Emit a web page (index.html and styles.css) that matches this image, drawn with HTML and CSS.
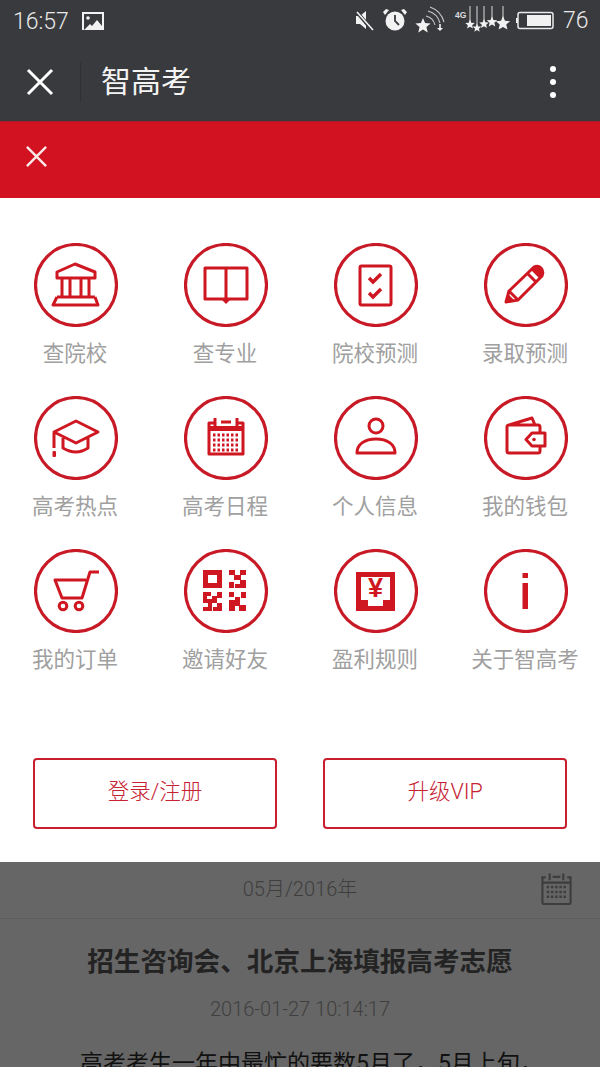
FILE: index.html
```html
<!DOCTYPE html>
<html lang="zh-CN">
<head>
<meta charset="utf-8">
<title>智高考</title>
<link rel="stylesheet" href="styles.css">
</head>
<body>
<div class="phone">
  <header class="status">
    <span class="time">16:57</span>
    <svg class="pic" viewBox="0 0 22 18"><path class="w" d="M0 0h22v18H0z"/><path class="d" d="M2 2h18v12l-5-6-5 6-2-2-6 6z"/><circle class="w" cx="6" cy="6" r="1.8"/></svg>
    <span class="grow"></span>
    <svg class="sys" viewBox="0 0 210 42">
      <defs><polygon id="s" points="0,-1 .26,-.36 .95,-.31 .43,.14 .59,.81 0,.45 -.59,.81 -.43,.14 -.95,-.31 -.26,-.36"/></defs>
      <path class="w" d="M6 16h4l6-5v18l-6-5H6z"/>
      <path class="kd" d="M6 11l17 20"/><path class="kw2" d="M7 12l16 18"/>
      <circle class="w" cx="45" cy="21" r="9.500"/><path class="hand" d="M45 15v6l4 4"/>
      <path class="w" d="M35 15l4-5-3-1-3 3zM55 15l-4-5 3-1 3 3z"/>
      <use class="w" href="#s" transform="translate(73 26) scale(8)"/>
      <path class="arc" d="M76 16a12 12 0 0 1 9 9M78 11a17 17 0 0 1 12 12M80 7a22 22 0 0 1 14 15"/>
      <path class="kw" d="M90 24v6"/><path class="w" d="M87 28h6l-3 3z"/>
      <text class="g4" x="105" y="18">4G</text>
      <path class="stem" d="M120 6v18M127 6v22M134 6v18M142 6v16M153 6v17"/>
      <use class="w" href="#s" transform="translate(120 24.500) scale(5)"/>
      <use class="w" href="#s" transform="translate(127 28) scale(4.500)"/>
      <use class="w" href="#s" transform="translate(134 24) scale(5)"/>
      <use class="w" href="#s" transform="translate(142 22) scale(5.500)"/>
      <use class="w" href="#s" transform="translate(153 23.500) scale(7.500)"/>
      <path class="w" d="M166 18h2v5h-2z"/>
      <rect class="batt" x="168" y="12.500" width="35" height="16" rx="2"/>
      <rect class="w" x="177" y="15" width="24" height="11"/>
    </svg>
    <span class="level">76</span>
  </header>

  <nav class="toolbar">
    <button class="close" type="button" aria-label="关闭"><svg viewBox="0 0 28 28"><path d="M2 2l24 24M26 2L2 26"/></svg></button>
    <h1 class="title">智高考</h1>
    <span class="more"><i></i><i></i><i></i></span>
  </nav>

  <div class="banner"><svg viewBox="0 0 24 24"><path d="M2 2l20 20M22 2L2 22"/></svg></div>

  <main class="sheet">
    <ul class="menu">
      <li class="item">
        <svg class="ico" viewBox="0 0 84 84"><circle class="ring" cx="42" cy="42" r="40.500"/>
          <path class="ln" d="M41 21L23 29v6h38v-6zM28 35v19M36 35v19M47 35v19M55 35v19M23 54h38M23 54l-4 8h45l-3-8"/></svg>
        <span class="label">查院校</span>
      </li>
      <li class="item">
        <svg class="ico" viewBox="0 0 84 84"><circle class="ring" cx="42" cy="42" r="40.500"/>
          <path class="ln" d="M42 25H21v31h21zM42 25h21v31H42zM42 25v31"/><path class="fl" d="M37 56h10l-5 5z"/></svg>
        <span class="label">查专业</span>
      </li>
      <li class="item">
        <svg class="ico" viewBox="0 0 84 84"><circle class="ring" cx="42" cy="42" r="40.500"/>
          <rect class="ln" x="26" y="23" width="31" height="39" rx="1.500"/><path class="ck" d="M35 35l4 4 8-8M35 50l4 4 8-8"/></svg>
        <span class="label">院校预测</span>
      </li>
      <li class="item">
        <svg class="ico" viewBox="0 0 84 84"><circle class="ring" cx="42" cy="42" r="40.500"/>
          <path class="ln" d="M22 59l3-11 25-24q4-2 7 1t1 8L34 57zM25 48l9 9M44 31l8 8"/><path class="fl" d="M21 60l3-9 6 6z"/><path class="fl" d="M50 24q4-2 7 1t1 8l-3 2-8-8z"/></svg>
        <span class="label">录取预测</span>
      </li>
      <li class="item">
        <svg class="ico" viewBox="0 0 84 84"><circle class="ring" cx="42" cy="42" r="40.500"/>
          <path class="ln" d="M42 25L20 36l22 11 22-11zM29 42v10q13 8 25 0V42M20 37v15"/><rect class="fl" x="18.500" y="55" width="3.500" height="6" rx="1"/></svg>
        <span class="label">高考热点</span>
      </li>
      <li class="item">
        <svg class="ico" viewBox="0 0 84 84"><circle class="ring" cx="42" cy="42" r="40.500"/>
          <path class="ln" d="M31 27h-6v31h34V27h-6M37 26h10"/><path class="ln" d="M31 22v8M53 22v8"/><rect class="fl" x="24" y="30" width="36" height="5"/>
          <path class="dots" d="M29 39h26M29 44h26M29 49h26M29 54h26"/></svg>
        <span class="label">高考日程</span>
      </li>
      <li class="item">
        <svg class="ico" viewBox="0 0 84 84"><circle class="ring" cx="42" cy="42" r="40.500"/>
          <circle class="ln" cx="42" cy="30" r="7"/><path class="ln" d="M23 57c0-9 8-14 19-14s19 5 19 14z"/></svg>
        <span class="label">个人信息</span>
      </li>
      <li class="item">
        <svg class="ico" viewBox="0 0 84 84"><circle class="ring" cx="42" cy="42" r="40.500"/>
          <path class="ln" d="M56 37V31q0-2-2-2H25q-2 0-2 2v24q0 2 2 2h29q2 0 2-2v-5M25 29l23-7 3 7M48 37h13v13H48l-6-6.500z"/><circle class="fl" cx="50" cy="43.500" r="1.800"/></svg>
        <span class="label">我的钱包</span>
      </li>
      <li class="item">
        <svg class="ico" viewBox="0 0 84 84"><circle class="ring" cx="42" cy="42" r="40.500"/>
          <path class="ln" d="M65 23h-9l-8 26H28l-7-18h31"/><circle class="ln" cx="29" cy="57" r="3.800"/><circle class="ln" cx="45" cy="57" r="3.800"/></svg>
        <span class="label">我的订单</span>
      </li>
      <li class="item">
        <svg class="ico" viewBox="0 0 84 84"><circle class="ring" cx="42" cy="42" r="40.500"/>
          <path class="fe" d="M19 21h19v18H19zM24 26v8h9v-8z"/>
          <path class="fl" d="M45 21h6v5h5v-5h6v5h-5v5h5v8H51v-4h5v-4h-6v-5h-5zM45 33h5v6h-5zM19 43h8v4h-4v3h5v-3h5v-4h5v6h-5v5h-5v8h-9v-4h5v-4h-5zM33 54h5v8h-9v-4h4zM45 43h5v5h-5zM54 43h3v6h5v-6h-4zM45 51h6v-3h5v8h6v6h-7v-5h-4v5h-6zM45 57h6v5h-6z"/></svg>
        <span class="label">邀请好友</span>
      </li>
      <li class="item">
        <svg class="ico" viewBox="0 0 84 84"><circle class="ring" cx="42" cy="42" r="40.500"/>
          <path class="fe" d="M22 23h39v39H22zM27 28v23h7v6h15v-6h7V28z"/><text class="yen" x="41.500" y="48">¥</text></svg>
        <span class="label">盈利规则</span>
      </li>
      <li class="item">
        <svg class="ico" viewBox="0 0 84 84"><circle class="ring" cx="42" cy="42" r="40.500"/>
          <rect class="fl" x="38.500" y="24" width="5.500" height="5"/><rect class="fl" x="38.500" y="34" width="5.500" height="26"/></svg>
        <span class="label">关于智高考</span>
      </li>
    </ul>
    <div class="actions">
      <button class="btn" type="button">登录/注册</button>
      <button class="btn" type="button">升级VIP</button>
    </div>
  </main>

  <section class="under">
    <div class="datebar">
      <span class="month">05月/2016年</span>
      <svg class="cal" viewBox="0 0 34 34">
        <path class="cl" d="M6 5H2.500v26q0 1.500 1.500 1.500h26q1.500 0 1.500-1.500V5H28M2.500 10.500h29M10 1v7M24 1v7M13 4.500h8"/>
        <path class="cd" d="M7 15h21M7 20h21M7 25h21"/>
      </svg>
    </div>
    <article class="post">
      <h2 class="headline">招生咨询会、北京上海填报高考志愿</h2>
      <p class="stamp">2016-01-27 10:14:17</p>
      <p class="para">高考考生一年中最忙的要数5月了，5月上旬，</p>
    </article>
  </section>
</div>
</body>
</html>
```

FILE: styles.css
```css
* { box-sizing: border-box; }
html, body { margin: 0; padding: 0; }
body {
  width: 600px;
  height: 1067px;
  overflow: hidden;
  font-family: Roboto, "Noto Sans CJK SC", sans-serif;
}
.phone { display: flex; flex-direction: column; width: 600px; height: 1067px; overflow: hidden; }

.status {
  display: flex;
  align-items: center;
  flex: none;
  height: 42px;
  padding: 0 13px;
  background: #393a3e;
  color: #e9e9e9;
}
.time { font-size: 23px; font-weight: 300; }
.pic { width: 22px; height: 18px; margin-left: 13px; margin-top: -1px; }
.grow { flex: 1; }
.sys { width: 210px; height: 42px; margin-right: 3px; }
.level { font-size: 23px; font-weight: 300; width: 24px; margin-top: -2px; }
.w { fill: #f2f2f2; }
.d { fill: #393a3e; }
.kd { stroke: #393a3e; stroke-width: 3.5; fill: none; }
.kw2 { stroke: #f2f2f2; stroke-width: 1.6; fill: none; }
.kw { stroke: #f2f2f2; stroke-width: 1.6; fill: none; }
.hand { stroke: #393a3e; stroke-width: 1.8; fill: none; }
.arc { stroke: #c8c8c8; stroke-width: 1.1; fill: none; }
.g4 { fill: #ddd; font-family: "Liberation Sans", sans-serif; font-size: 8.500px; font-weight: 700; }
.stem { stroke: #b5b5b5; stroke-width: 1.3; fill: none; }
.batt { fill: none; stroke: #e9e9e9; stroke-width: 1.5; }

.toolbar {
  display: flex;
  align-items: center;
  flex: none;
  height: 80px;
  background: #393a3e;
  border-bottom: 1px solid #a81c27;
}
.close {
  display: flex;
  align-items: center;
  justify-content: center;
  width: 81px;
  height: 40px;
  padding: 0 1px 0 0;
  border: 0;
  border-right: 1px solid #2f3033;
  background: none;
}
.close svg { width: 28px; height: 28px; }
.close path { stroke: #fff; stroke-width: 3; fill: none; }
.title {
  flex: 1;
  margin: 0 0 0 20px;
  color: #f4f4f4;
  font-size: 30px;
  font-weight: 400;
  line-height: 40px;
}
.more { display: flex; flex-direction: column; gap: 7px; margin-right: 44px; }
.more i { display: block; width: 6px; height: 6px; border-radius: 50%; background: #fff; }

.banner {
  display: flex;
  align-items: center;
  flex: none;
  height: 76px;
  padding: 0 0 8px 25px;
  background: #d21220;
}
.banner svg { width: 23px; height: 23px; }
.banner path { stroke: #fbe9ea; stroke-width: 2.500; fill: none; }

.sheet { flex: none; height: 664px; background: #fff; }
.menu {
  display: grid;
  grid-template-columns: repeat(4, 150px);
  grid-auto-rows: 153px;
  margin: 0;
  padding: 45px 0 0;
  list-style: none;
}
.item { display: flex; flex-direction: column; align-items: center; }
.ico { display: block; width: 84px; height: 84px; margin-left: 2px; }
.label {
  margin-top: 11px;
  color: #a0a0a0;
  font-size: 21.500px;
  line-height: 32px;
  white-space: nowrap;
}
.ring { fill: none; stroke: #c81a26; stroke-width: 3.200; }
.ln { fill: none; stroke: #cf1722; stroke-width: 3; stroke-linejoin: round; }
.ck { fill: none; stroke: #cf1722; stroke-width: 3.400; }
.fl { fill: #cf1722; }
.fe { fill: #cf1722; fill-rule: evenodd; }
.dots { fill: none; stroke: #cf1722; stroke-width: 3; stroke-dasharray: 2.500 2; }
.yen { fill: #cf1722; font-family: "Liberation Sans", sans-serif; font-size: 27px; font-weight: 700; text-anchor: middle; }

.actions {
  display: flex;
  justify-content: space-between;
  padding: 0 33px;
  margin-top: 56px;
}
.btn {
  width: 244px;
  height: 71px;
  padding: 0 0 8px;
  border: 2px solid #c81f2e;
  border-radius: 4px;
  background: #fff;
  color: #c62232;
  font-family: Roboto, "Noto Sans CJK SC", sans-serif;
  font-size: 21.500px;
  font-weight: 300;
}

.under { flex: 1; background: #666; }
.datebar {
  position: relative;
  display: flex;
  align-items: center;
  justify-content: center;
  height: 57px;
  padding-bottom: 6px;
  border-bottom: 1px solid #5e5e5e;
}
.month { color: #3e3e3e; font-size: 20px; font-weight: 300; }
.cal { position: absolute; right: 27px; top: 10px; width: 33px; height: 34px; }
.cl { fill: none; stroke: #3d3d3d; stroke-width: 2.200; }
.cd { fill: none; stroke: #3d3d3d; stroke-width: 2.600; stroke-dasharray: 2.500 1.800; }
.post { text-align: center; }
.headline {
  margin: 23px 0 0;
  color: #232323;
  font-size: 26.600px;
  font-weight: 700;
  line-height: 40px;
}
.stamp { margin: 13px 0 0; color: #3f3f3f; font-size: 20px; font-weight: 300; line-height: 28px; }
.para { margin: 24px 0 0; padding-left: 80px; color: #111; font-size: 23px; line-height: 34px; text-align: left; white-space: nowrap; }
```
